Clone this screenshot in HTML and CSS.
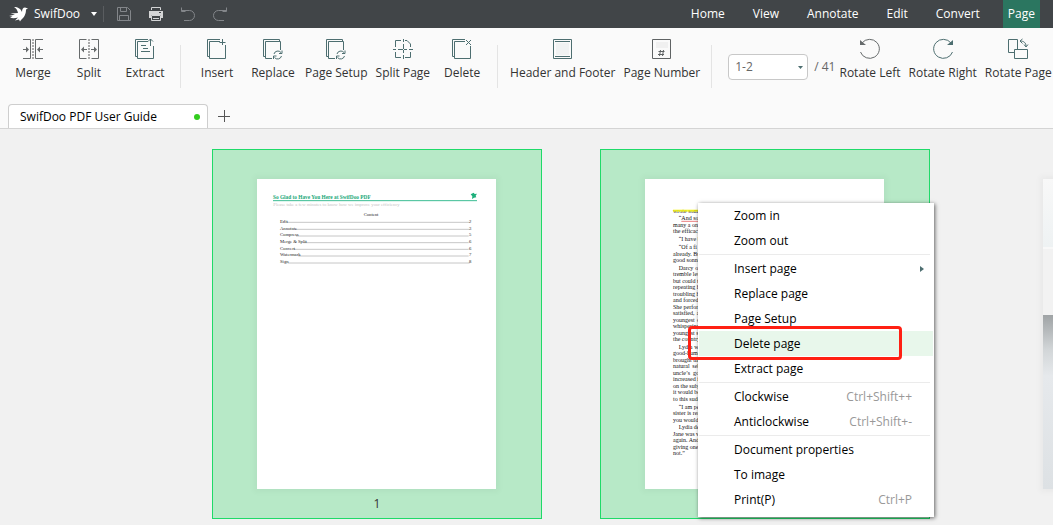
FILE: index.html
```html
<!DOCTYPE html>
<html lang="en">
<head>
<meta charset="utf-8">
<title>SwifDoo</title>
<link rel="stylesheet" href="styles.css">
</head>
<body>
<header class="titlebar">
  <button class="brand" type="button">
    <svg class="logo" width="20" height="18" viewBox="0 0 20 18" aria-hidden="true"><path fill="#fff" d="M5 2c4 0 7 2 8 5 0-3 1-4.500 3-4.500l3 1-2 1c0 5-2 8-5 10.500l-1 1.500-1-2-4 1 3-3c-3 1-6 1-8 0l2.500-1L0 11l6-1.500L1.500 8.500 9 8C8.500 5 7 3 5 2z"/></svg>
    <span>SwifDoo</span>
    <svg width="6" height="4" viewBox="0 0 6 4" aria-hidden="true"><path fill="#fff" d="M0 0h6L3 4z"/></svg>
  </button>
  <div class="quick">
    <button type="button" aria-label="Save"><svg width="16" height="16" viewBox="0 0 16 16" fill="none" stroke="#83868a"><path d="M1.500 1.500h10l3 3v10h-13zM4.500 1.500v4h6v-4M3.500 14.500v-5h9v5"/></svg></button>
    <button type="button" aria-label="Print"><svg width="16" height="16" viewBox="0 0 16 16"><path fill="none" stroke="#d4d5d6" d="M3.500 4V1.500h9V4"/><path fill="#d4d5d6" d="M1 5h14v7h-2V9H3v3H1z"/><path fill="none" stroke="#d4d5d6" d="M3.500 9.500h9v5h-9zM5 12.500h6"/><path fill="#414548" d="M11 6h2v1h-2z"/></svg></button>
    <button type="button" aria-label="Undo"><svg width="16" height="16" viewBox="0 0 16 16" fill="none" stroke="#83868a"><path d="M1.500 1.500v4h4M2 4.500h7.500a5 5 0 0 1 0 10H4"/></svg></button>
    <button type="button" aria-label="Redo"><svg width="16" height="16" viewBox="0 0 16 16" fill="none" stroke="#83868a"><path d="M14.500 1.500v4h-4M14 4.500H6.500a5 5 0 0 0 0 10H12"/></svg></button>
  </div>
  <nav class="menu">
    <a href="#home">Home</a><a href="#view">View</a><a href="#annotate">Annotate</a><a href="#edit">Edit</a><a href="#convert">Convert</a><a class="active" href="#page">Page</a>
  </nav>
</header>

<div class="toolbar">
  <div class="group">
    <button class="tool" type="button"><svg width="22" height="22" viewBox="0 0 22 22" fill="none" stroke="#666a6b"><path d="M1 1.500h7.500v19H1M21 1.500h-7.500v19H21M1 11.500h5M21 11.500h-5"/><path fill="#666a6b" stroke="none" d="M4 8.500l3 3-3 3zM18 8.500l-3 3 3 3z"/><path stroke="#aaa" stroke-width="2" stroke-dasharray="2 1" d="M11 1v20"/></svg>Merge</button>
    <button class="tool" type="button"><svg width="22" height="22" viewBox="0 0 22 22" fill="none" stroke="#666a6b"><path d="M8.500 1.500h-7v19h7M13.500 1.500h7v19h-7M9 11.500H4M13 11.500h5"/><path fill="#666a6b" stroke="none" d="M6 8.500l-3 3 3 3zM16 8.500l3 3-3 3z"/><path stroke="#aaa" stroke-width="2" stroke-dasharray="2 1" d="M11 1v20"/></svg>Split</button>
    <button class="tool" type="button"><svg width="22" height="22" viewBox="0 0 22 22" fill="none" stroke="#4d6e70"><path d="M4 18.500H1.500v-17H14M14 3.500H3.500v17h16V8M7 7.500h5M9 10.500h5M7 13.500h9M16.500 8V1M14 3.500L16.500 1 19 3.500"/></svg>Extract</button>
  </div>
  <div class="group">
    <button class="tool" type="button"><svg width="22" height="22" viewBox="0 0 22 22" fill="none" stroke="#4d6e70"><path d="M4 18.500H1.500v-17H14M14 3.500H3.500v17h16V7M16.500 1v6M13.500 4.500h6"/></svg>Insert</button>
    <button class="tool" type="button"><svg width="22" height="22" viewBox="0 0 22 22" fill="none" stroke="#4d6e70"><path d="M3 18.500H1.500v-17h16V3M10 20.500H3.500v-17h15V12M12 16a4 4 0 0 1 7-1.500M20 12.500v3h-3M19.500 18a4 4 0 0 1-7 1.500M11.500 21v-3h3"/></svg>Replace</button>
    <button class="tool" type="button"><svg width="22" height="22" viewBox="0 0 22 22" fill="none" stroke="#4d6e70"><path d="M3 18.500H1.500v-17h16V3M10 20.500H3.500v-17h15V12M12 16a4 4 0 0 1 7-1.500M20 12.500v3h-3M19.500 18a4 4 0 0 1-7 1.500M11.500 21v-3h3"/></svg>Page Setup</button>
    <button class="tool" type="button"><svg width="22" height="22" viewBox="0 0 22 22" fill="none" stroke="#4d6e70"><path d="M9 2.500H3.500V9M13 2.500h2l3.500 3.500V9M3.500 14v5.500H9M13 19.500h5.500V14"/><path stroke-dasharray="3 2 5 1" d="M1 11.500h20M11.500 1v20"/></svg>Split Page</button>
    <button class="tool" type="button"><svg width="22" height="22" viewBox="0 0 22 22" fill="none" stroke="#4d6e70"><path d="M4 18.500H1.500v-17H14M14 3.500H3.500v17h16V8M15 2l5 5M20 2l-5 5"/></svg>Delete</button>
  </div>
  <div class="group">
    <button class="tool" type="button"><svg width="22" height="22" viewBox="0 0 22 22" fill="none" stroke="#4d6e70"><path d="M1.500 1.500h18v19h-18z"/><path stroke="none" fill="#f0f2f2" d="M4 5h13v12H4z"/><path d="M3 3.500h15M3 18.500h15"/></svg>Header and Footer</button>
    <button class="tool" type="button"><svg width="22" height="22" viewBox="0 0 22 22" fill="none" stroke="#5f6364"><path d="M1.500 1.500h18v19h-18z"/><path stroke="none" fill="#f0f0f0" d="M5 4h12v6H5z"/><path d="M9.500 12l-1 6M12.500 12l-1 6M7.500 13.500h6M7 16.500h6"/></svg>Page Number</button>
  </div>
  <div class="group pager">
    <label class="range"><select aria-label="Page range"><option>1-2</option></select><svg width="5" height="3" viewBox="0 0 5 3" aria-hidden="true"><path fill="#4d6e70" d="M0 0h5L2.500 3z"/></svg></label>
    <span class="total">/ 41</span>
    <button class="tool" type="button"><svg width="22" height="22" viewBox="0 0 22 22" fill="none" stroke="#666a6b"><path d="M1.500 14a9.700 9.500 0 1 0 1.500-9"/><path fill="#666a6b" stroke="none" d="M1 2v5h6L4.500 5z"/></svg>Rotate Left</button>
    <button class="tool" type="button"><svg width="22" height="22" viewBox="0 0 22 22" fill="none" stroke="#4d6e70"><path d="M20.500 14a9.700 9.500 0 1 1-1.500-9"/><path fill="#4d6e70" stroke="none" d="M21 2v5h-6l2.500-2z"/></svg>Rotate Right</button>
    <button class="tool" type="button"><svg width="22" height="22" viewBox="0 0 22 22" fill="none" stroke="#4d6e70"><path d="M7 14.500H1.500v-13h9V11M7.500 11.500h13v9h-13zM13 3c4 0 6 2 6 5M15.500 1L13 3l2.500 2.500M17 6.500L19 9l2-2.500"/></svg>Rotate Page</button>
  </div>
</div>

<div class="tabs">
  <button class="tab" type="button"><span>SwifDoo PDF User Guide</span><i class="dot"></i></button>
  <button class="add" type="button" aria-label="New tab"><svg width="12" height="12" viewBox="0 0 12 12"><path stroke="#555" d="M0 6.500h12M6.500 0v12"/></svg></button>
</div>

<main class="canvas">
  <figure class="thumb selected">
    <svg class="sheet" viewBox="0 0 717 930" role="img" aria-label="Page 1">
      <text class="heading" x="48" y="60">So Glad to Have You Here at SwifDoo PDF</text>
      <path fill="#1fb07c" d="M641 46l9-5 3 4 7-1-4 6 2 5-7 1-6 4 1-8z"/>
      <path stroke="#3cbd93" stroke-width="3" d="M48 65h612"/>
      <text class="sub" x="49" y="81">Please take a few minutes to know how we improve your efficiency</text>
      <text class="toc" x="342" y="110" text-anchor="middle">Content</text>
      <path class="leader" d="M90 130h548M114 151h524M117 171h518M139 191h496M110 211h525M124 231h511M92 252h546"/>
      <g class="toc"><text x="69" y="131">Edit</text><text x="69" y="152">Annotate</text><text x="69" y="172">Compress</text><text x="69" y="192">Merge &amp; Split</text><text x="69" y="212">Convert</text><text x="69" y="232">Watermark</text><text x="69" y="253">Sign</text></g>
      <g class="toc"><text x="636" y="131">2</text><text x="636" y="152">3</text><text x="636" y="172">5</text><text x="636" y="192">6</text><text x="636" y="212">6</text><text x="636" y="232">7</text><text x="636" y="253">8</text></g>
    </svg>
    <figcaption>1</figcaption>
  </figure>
  <figure class="thumb selected">
    <svg class="sheet book" viewBox="0 0 717 930" role="img" aria-label="Page 2">
      <text x="84" y="101">wrote some</text>
      <path fill="#f4f400" fill-opacity=".8" d="M84 92h90v6H84z"/>
      <text x="101" y="123">“And so</text>
      <path stroke="#e04040" stroke-width="2" d="M109 127h60"/>
      <text x="84" y="143">many a one</text><text x="84" y="162">the efficacy</text>
      <text x="101" y="186">“I have b</text><text x="101" y="210">“Of a fi</text><text x="84" y="230">already. But</text><text x="84" y="249">good sonnet</text>
      <text x="101" y="273">Darcy<tspan x="151">o</tspan></text><text x="84" y="292">tremble lest</text><text x="84" y="311">but could t</text><text x="84" y="331">repeating h</text><text x="84" y="350">troubling h</text><text x="84" y="370">and forced</text><text x="84" y="389">She perfor</text><text x="84" y="409">satisfied,<tspan x="155">a</tspan></text><text x="84" y="428">youngest<tspan x="156">o</tspan></text><text x="84" y="447">whispering</text><text x="84" y="467">youngest s</text><text x="84" y="486">the country</text>
      <text x="101" y="510">Lydia<tspan x="148">w</tspan></text><text x="84" y="529">good-humo</text><text x="84" y="549">brought the</text><text x="84" y="568">natural<tspan x="142">self</tspan></text><text x="84" y="588">uncle’s<tspan x="144">goo</tspan></text><text x="84" y="607">increased i</text><text x="84" y="626">on the subj</text><text x="84" y="646">it would be</text><text x="84" y="665">to this sudd</text>
      <text x="101" y="689">“I am pe</text><text x="84" y="708">sister is rea</text><text x="84" y="728">you would</text>
      <text x="101" y="751">Lydia de</text><text x="84" y="771">Jane was w</text><text x="84" y="790">again. And</text><text x="84" y="810">giving one</text><text x="84" y="829">not.”</text>
    </svg>
  </figure>
  <figure class="thumb narrow">
    <div class="sheet cover"><div class="sky"></div><div class="band"></div><div class="photo"></div></div>
  </figure>
</main>

<div class="context" role="menu">
  <button role="menuitem" type="button">Zoom in</button>
  <button role="menuitem" type="button">Zoom out</button>
  <hr>
  <button class="parent" role="menuitem" type="button">Insert page<svg width="4" height="6" viewBox="0 0 4 6" aria-hidden="true"><path fill="#4d6e70" d="M0 0l4 3-4 3z"/></svg></button>
  <button role="menuitem" type="button">Replace page</button>
  <button role="menuitem" type="button">Page Setup</button>
  <button class="hover" role="menuitem" type="button">Delete page</button>
  <button role="menuitem" type="button">Extract page</button>
  <hr>
  <button role="menuitem" type="button">Clockwise<kbd>Ctrl+Shift++</kbd></button>
  <button role="menuitem" type="button">Anticlockwise<kbd>Ctrl+Shift+-</kbd></button>
  <hr>
  <button role="menuitem" type="button">Document properties</button>
  <button role="menuitem" type="button">To image</button>
  <button role="menuitem" type="button">Print(P)<kbd>Ctrl+P</kbd></button>
  <div class="marker"></div>
</div>
</body>
</html>
```
FILE: styles.css
```css
* { box-sizing: border-box; }
body {
  margin: 0;
  height: 100vh;
  display: flex;
  flex-direction: column;
  overflow: hidden;
  background: #f1f1f1;
  color: #333;
  font: 12px/16px "Open Sans", "Noto Sans", sans-serif;
}
button, select { font: inherit; color: inherit; border: 0; background: none; padding: 0; margin: 0; }
svg { display: block; flex: none; }

.titlebar { display: flex; align-items: center; flex: none; height: 28px; padding: 0 13px 0 9px; background: #414548; color: #fff; }
.brand { display: flex; align-items: center; height: 16px; padding-right: 6px; border-right: 1px solid #5a5d60; }
.brand span { width: 57px; margin-left: 5px; text-align: left; }
.quick { display: flex; gap: 16px; margin-left: 12px; }
.menu { display: flex; gap: 18px; height: 100%; margin-left: auto; }
.menu a { display: flex; align-items: center; padding: 0 5px; color: #fff; text-decoration: none; }
.menu .active { background: #2b7660; }

.toolbar { display: flex; flex: none; height: 72px; padding-left: 5px; background: #fafafa; }
.group { display: flex; position: relative; flex: none; padding-right: 8px; margin-right: 8px; }
.group:not(.pager)::after { content: ""; position: absolute; right: 0; top: 17px; width: 1px; height: 43px; background: #e4e4e4; }
.tool { display: flex; flex-direction: column; align-items: center; flex: none; gap: 5px; min-width: 56px; padding: 10px 4px 0; white-space: nowrap; }
.pager { margin: 0; padding: 0 0 0 8px; }
.pager .tool { padding: 10px 4px 0; }
.range { display: flex; position: relative; width: 80px; height: 26px; margin-top: 26px; }
.range select { appearance: none; width: 100%; padding: 0 6px; border: 1px solid #c8c8c8; border-radius: 4px; background: #fff; color: #666; }
.range svg { position: absolute; right: 5px; top: 12px; }
.total { margin: 31px 0 0 6px; color: #666; white-space: nowrap; }

.tabs { display: flex; flex: none; height: 29px; padding: 4px 8px 0; background: #fafafa; border-bottom: 1px solid #d4d4d4; }
.tab { display: flex; align-items: center; justify-content: space-between; width: 200px; padding: 0 7px 0 11px; border: 1px solid #cecece; border-bottom: 0; border-radius: 4px 4px 0 0; background: #fff; color: #000; }
.dot { width: 6px; height: 6px; border-radius: 50%; background: #32cd1e; }
.add { width: 32px; padding: 0 10px; }

.canvas { display: flex; flex: 1; gap: 58px; align-items: flex-start; min-height: 0; padding: 20px 0 0 212px; overflow: hidden; }
.thumb { flex: none; width: 330px; min-height: 370px; margin: 0; padding: 29px 44px 0; border: 1px solid transparent; }
.selected { background: #b7e9c7; border-color: #1fda69; }
.narrow { padding: 29px 54px 0; }
.sheet { width: 100%; max-width: 239px; height: 310px; background: #fff; box-shadow: 0 0 6px 3px rgba(0, 0, 0, .035); }
.thumb figcaption { padding: 7px 0 6px; text-align: center; }
.sheet text { font-family: "Liberation Serif", serif; }
.heading { font-size: 16px; font-weight: bold; fill: #17a878; }
.sub { font-size: 14px; fill: #c4c4c4; }
.toc { font-size: 14px; fill: #222; }
.leader { stroke: #aaa; stroke-width: 2px; }
.book { font-size: 18px; fill: #111; }
.cover { display: flex; flex-direction: column; background: #f2f2f2; }
.sky { height: 70px; background: linear-gradient(#f8f8f8, #eef2f3); border-bottom: 2px solid #f8f8f8; }
.band { height: 66px; }
.photo { flex: 1; background: linear-gradient(#9fa3a5, #d2d6d8 20%, #e6e9ec 35%, #dde1e4); }

.context { position: absolute; left: 698px; top: 203px; width: 236px; padding: 0 1px 5px; background: #fff; color: #000; box-shadow: 1px 1px 4px rgba(0, 0, 0, .6); }
.context button { display: flex; align-items: center; justify-content: space-between; width: 100%; height: 25px; padding: 0 21px 0 35px; }
.context .parent { padding-right: 9px; }
.context .hover { background: #e8f7eb; }
.context kbd { font: inherit; color: #999; }
.context hr { height: 1px; margin: 1px 3px 1px 0; border: 0; background: #ebebeb; }
.marker { position: absolute; left: -10px; top: 123px; width: 214px; height: 34px; border: 3px solid #ff2013; border-radius: 4px; pointer-events: none; }
```
